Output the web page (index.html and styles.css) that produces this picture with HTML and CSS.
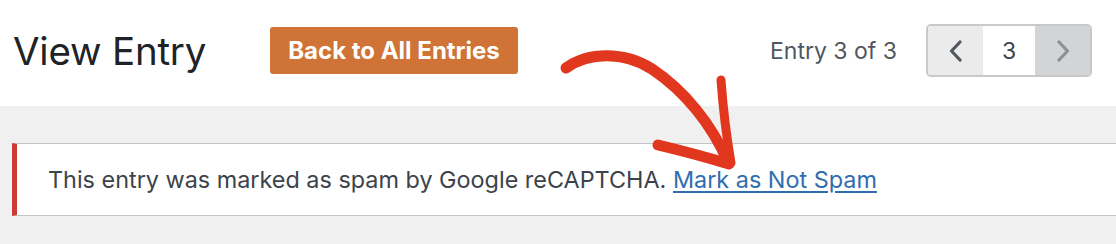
FILE: index.html
```html
<!DOCTYPE html>
<html lang="en">
<head>
<meta charset="utf-8">
<title>View Entry</title>
<link rel="stylesheet" href="styles.css">
</head>
<body>
<div class="page">
  <header class="header">
    <h1 class="title">View Entry</h1>
    <a class="back-btn" href="#">Back to All Entries</a>
    <div class="nav">
      <span class="nav-count">Entry 3 of 3</span>
      <div class="pager">
        <a class="pager-btn prev" href="#" aria-label="Previous">
          <svg width="16" height="22" viewBox="0 0 16 22"><path d="M12 2 L3.5 11 L12 20" fill="none" stroke="#50575e" stroke-width="3.2" stroke-linecap="round" stroke-linejoin="round"/></svg>
        </a>
        <span class="pager-num">3</span>
        <span class="pager-btn next disabled" aria-label="Next">
          <svg width="16" height="22" viewBox="0 0 16 22"><path d="M4 2 L12.5 11 L4 20" fill="none" stroke="#8c8f94" stroke-width="3.2" stroke-linecap="round" stroke-linejoin="round"/></svg>
        </span>
      </div>
    </div>
  </header>
  <main class="content">
    <div class="notice">
      <p class="notice-text">This entry was marked as spam by Google reCAPTCHA. <a class="notice-link" href="#">Mark as Not Spam</a></p>
    </div>
  </main>
  <svg class="arrow" viewBox="0 0 1116 244" width="1116" height="244" aria-hidden="true">
    <g fill="none" stroke="#e2371f" stroke-linecap="round" stroke-linejoin="round">
      <path d="M566 68 C588 52 624 51 652 69 C685 91 712 125 728 162" stroke-width="11"/>
      <path d="M658 145 Q692 153 729 164" stroke-width="11"/>
      <path d="M721 80 Q724 122 731 163" stroke-width="9"/>
    </g>
  </svg>
</div>
</body>
</html>
```

FILE: styles.css
```css
* { box-sizing: border-box; }
html, body { margin: 0; padding: 0; }
body {
  font-family: Inter, "Liberation Sans", Arial, sans-serif;
  background: #f0f0f1;
  width: 1116px;
  height: 244px;
  overflow: hidden;
}
.page {
  position: relative;
  width: 1116px;
  height: 244px;
}
.header {
  background: #ffffff;
  height: 106px;
  padding: 0 24px 5px 13px;
  display: flex;
  align-items: center;
}
.title {
  margin: 0;
  font-size: 38.5px;
  font-weight: 400;
  color: #1d2327;
  letter-spacing: -0.2px;
}
.back-btn {
  margin-left: 64px;
  height: 47px;
  padding: 0 18px;
  display: flex;
  align-items: center;
  background: #d07336;
  color: #ffffff;
  font-size: 24px;
  font-weight: 700;
  text-decoration: none;
  border-radius: 3px;
}
.nav {
  margin-left: auto;
  display: flex;
  align-items: center;
  gap: 29px;
}
.nav-count {
  font-size: 23px;
  color: #50575e;
}
.pager {
  display: flex;
  height: 53px;
  border: 2px solid #c8c9cb;
  border-radius: 5px;
  overflow: hidden;
}
.pager-btn {
  width: 55px;
  display: flex;
  align-items: center;
  justify-content: center;
  background: #ebebec;
}
.pager-btn.next { background: #d3d4d5; }
.pager-num {
  width: 52px;
  display: flex;
  align-items: center;
  justify-content: center;
  background: #ffffff;
  font-size: 23px;
  color: #3c434a;
}
.content {
  padding: 37px 0 0 12px;
}
.notice {
  height: 73px;
  background: #ffffff;
  border-top: 1px solid #c3c4c7;
  border-bottom: 1px solid #c3c4c7;
  border-left: 5px solid #cc3b37;
  display: flex;
  align-items: center;
  padding-left: 31px;
}
.notice-text {
  margin: 0;
  font-size: 23.4px;
  color: #3c434a;
}
.notice-link {
  color: #2f6db0;
  text-decoration: underline;
  text-underline-offset: 3px;
}
.arrow {
  position: absolute;
  left: 0;
  top: 0;
  pointer-events: none;
}
```
